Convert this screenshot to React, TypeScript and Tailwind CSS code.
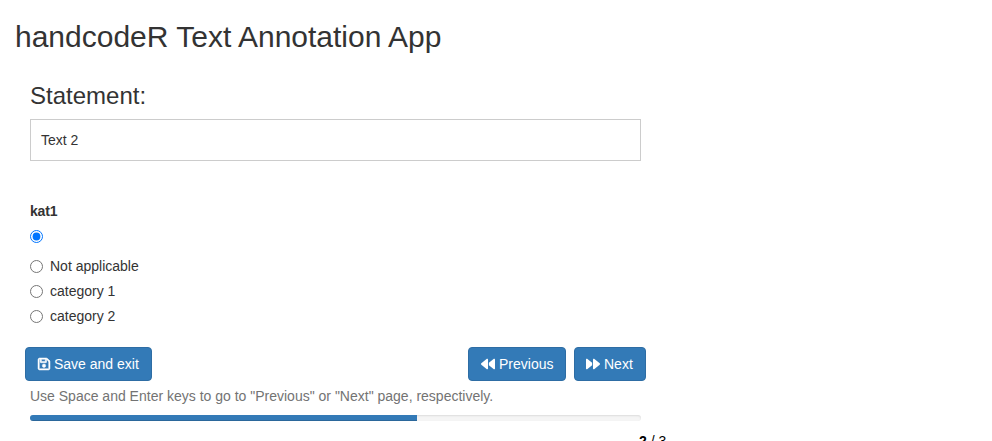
import { FaBackward, FaForward, FaRegFloppyDisk } from "react-icons/fa6";
import type { ReactNode } from "react";

const options = ["", "Not applicable", "category 1", "category 2"];

function Button({ icon, children, size }: { icon: ReactNode; children: ReactNode; size: string }) {
  return (
    <button
      className={`flex h-[34px] items-center gap-1 whitespace-nowrap rounded-[4px] border border-[#2e6da4] bg-[#337ab7] text-sm leading-5 text-white ${size}`}
    >
      {icon}
      <span>{children}</span>
    </button>
  );
}

export default function App() {
  return (
    <div className="h-[441px] overflow-hidden bg-white px-[15px] pt-5 font-['Liberation_Sans',Arial,sans-serif] text-sm leading-5 text-[#333]">
      <h2 className="h-[33px] text-[30px] leading-[33px]">handcodeR Text Annotation App</h2>
      <main className="w-[641px] px-[15px] pt-[30px]">
        <h3 className="h-[26px] text-2xl leading-[26px]">Statement:</h3>
        <div className="mt-[10px] w-[611px] border border-[#ccc] p-[10px]">Text 2</div>

        <div className="mt-10 font-bold tracking-[-0.2px]">kat1</div>
        <div className="flex flex-col gap-[5px] pt-[5px]">
          {options.map((label, i) => (
            <label key={i} className="flex h-5 items-start gap-[7px] first:mb-[5px]">
              <input
                type="radio"
                name="kat1"
                defaultChecked={i === 0}
                className="mt-1 h-[13px] w-[13px] shrink-0"
              />
              <span>{label}</span>
            </label>
          ))}
        </div>

        <div className="-mx-[5px] mt-[21px] flex justify-between">
          <Button
            size="w-[127px] pl-3"
            icon={<FaRegFloppyDisk className="h-[14px] w-[12px] shrink-0 overflow-visible stroke-white [stroke-width:18]" />}
          >
            Save and exit
          </Button>
          <div className="flex gap-2">
            <Button size="w-[98px] pl-3" icon={<FaBackward size={14} className="shrink-0" />}>
              Previous
            </Button>
            <Button size="w-[72px] pl-[11px]" icon={<FaForward size={14} className="shrink-0" />}>
              Next
            </Button>
          </div>
        </div>
        <p className="mt-[5px] whitespace-nowrap text-[#737373]">
          Use Space and Enter keys to go to "Previous" or "Next" page, respectively.
        </p>
        <div className="mt-[9px] h-[6px] w-[611px] overflow-hidden rounded-[4px] bg-[#f5f5f5] shadow-[inset_0_1px_2px_rgba(0,0,0,0.1)]">
          <div className="h-full w-[387px] bg-[#337ab7] shadow-[inset_0_-1px_0_rgba(0,0,0,0.15)]" />
        </div>
        <div className="ml-[609px] mt-[10px] whitespace-nowrap text-black">
          <b>2</b> / 3
        </div>
      </main>
    </div>
  );
}
